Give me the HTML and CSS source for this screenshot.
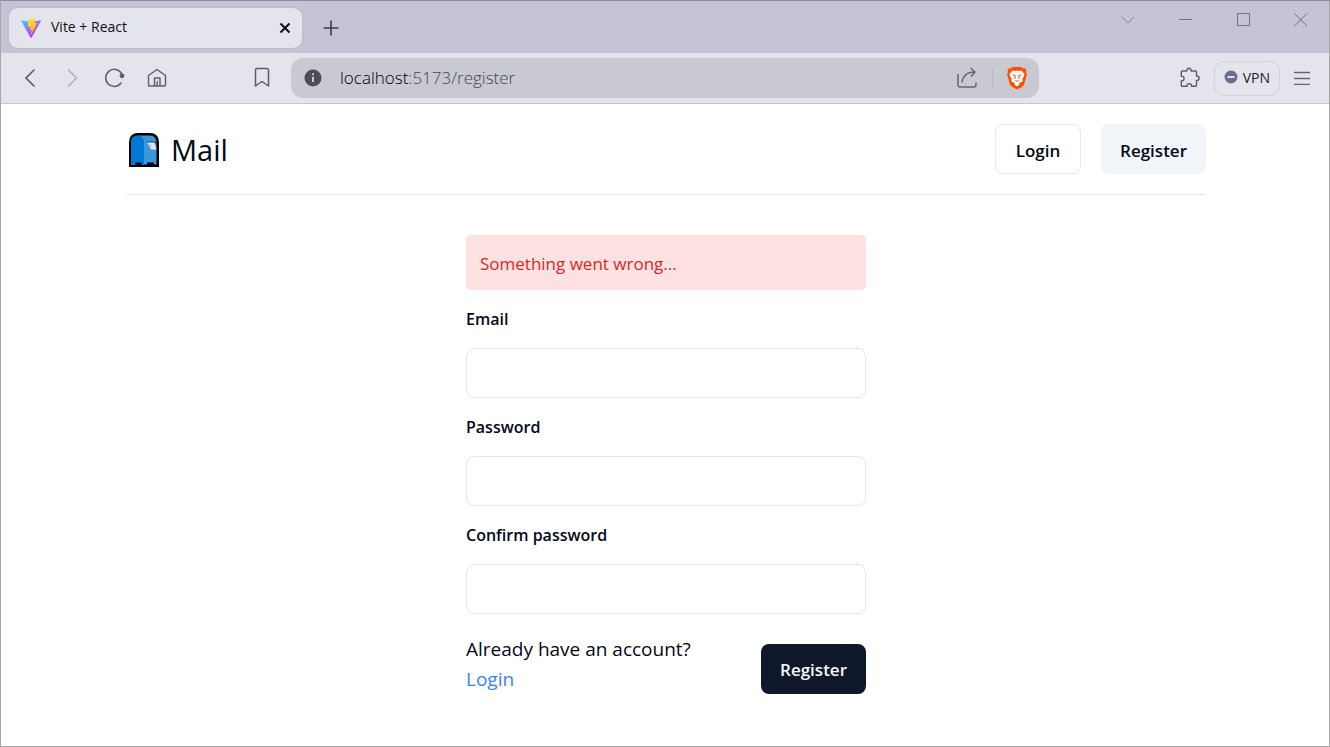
FILE: index.html
```html
<!DOCTYPE html>
<html lang="en">
<head>
<meta charset="utf-8">
<meta name="viewport" content="width=device-width, initial-scale=1">
<title>Vite + React</title>
<link rel="stylesheet" href="styles.css">
</head>
<body>
<div class="window">
  <div class="tabstrip">
    <div class="tab">
      <svg class="tab-icon" width="20" height="20" viewBox="0 0 256 257" aria-hidden="true">
        <defs>
          <linearGradient id="v1" x1="0" y1="0" x2="0.6" y2="0.85"><stop offset="0" stop-color="#41d1ff"/><stop offset="1" stop-color="#bd34fe"/></linearGradient>
          <linearGradient id="v2" x1="0.4" y1="0" x2="0.5" y2="1"><stop offset="0" stop-color="#ffea83"/><stop offset="0.1" stop-color="#ffdd35"/><stop offset="1" stop-color="#ffa800"/></linearGradient>
        </defs>
        <path fill="url(#v1)" d="M255.153 37.938 134.897 252.976c-2.483 4.44-8.862 4.466-11.382.048L.875 37.958c-2.746-4.814 1.371-10.646 6.827-9.67l120.385 21.517a6.537 6.537 0 0 0 2.322-.004l117.867-21.483c5.438-.991 9.574 4.796 6.877 9.62Z"/>
        <path fill="url(#v2)" d="M185.432.063 96.44 17.501a3.268 3.268 0 0 0-2.634 3.014l-5.474 92.456a3.268 3.268 0 0 0 3.997 3.378l24.777-5.718c2.318-.535 4.413 1.507 3.936 3.838l-7.361 36.047c-.495 2.426 1.782 4.5 4.151 3.78l15.304-4.649c2.372-.72 4.652 1.36 4.15 3.788l-11.698 56.621c-.732 3.542 3.979 5.473 5.943 2.437l1.313-2.028 72.516-144.72c1.215-2.423-.88-5.186-3.54-4.672l-25.505 4.922c-2.396.462-4.435-1.77-3.759-4.114l16.646-57.705c.677-2.35-1.37-4.583-3.769-4.113Z"/>
      </svg>
      <span class="tab-title">Vite + React</span>
      <button class="icon-btn tab-close" type="button" aria-label="Close tab">
        <svg width="12" height="12" viewBox="0 0 12 12" stroke="#111" stroke-width="2"><path d="M1.5 1.5l9 9M10.5 1.5l-9 9"/></svg>
      </button>
    </div>
    <button class="icon-btn new-tab" type="button" aria-label="New tab">
      <svg width="16" height="16" viewBox="0 0 16 16" stroke="#3c3c46" stroke-width="1.6"><path d="M8 .5v15M.5 8h15"/></svg>
    </button>
    <div class="window-controls">
      <button class="icon-btn" type="button" aria-label="Search tabs"><svg width="14" height="14" viewBox="0 0 14 14" fill="none" stroke="#858590"><path d="M1.500 3.500L8 10l6-6"/></svg></button>
      <button class="icon-btn" type="button" aria-label="Minimize"><svg width="14" height="14" viewBox="0 0 14 14" fill="none" stroke="#73737f"><path d="M1 6.500h13"/></svg></button>
      <button class="icon-btn" type="button" aria-label="Maximize"><svg width="14" height="14" viewBox="0 0 14 14" fill="none" stroke="#73737f"><path d="M1.500 .5h12v12h-12z"/></svg></button>
      <button class="icon-btn" type="button" aria-label="Close window"><svg width="14" height="14" viewBox="0 0 14 14" fill="none" stroke="#73737f"><path d="M.5 .5l12.500 12.500M13 .5L.5 13"/></svg></button>
    </div>
  </div>

  <div class="toolbar">
    <div class="nav">
      <div class="nav-group">
        <button class="icon-btn" type="button" aria-label="Back"><svg width="22" height="22" viewBox="0 0 22 22" fill="none" stroke="#56565e" stroke-width="1.6" stroke-linecap="round"><path d="M15 3L7 11l8 8"/></svg></button>
        <button class="icon-btn" type="button" aria-label="Forward"><svg width="22" height="22" viewBox="0 0 22 22" fill="none" stroke="#b0b0b8" stroke-width="1.6" stroke-linecap="round"><path d="M7.500 3l8 8-8 8"/></svg></button>
        <button class="icon-btn" type="button" aria-label="Reload"><svg width="22" height="22" viewBox="0 0 22 22" fill="none" stroke="#5d5d65" stroke-width="1.5" stroke-linecap="round"><path d="M19 7.500A8.500 8.500 0 1 0 18 16"/><circle cx="19" cy="8.800" r="2.400" fill="#5d5d65" stroke="none"/></svg></button>
        <button class="icon-btn" type="button" aria-label="Home"><svg width="22" height="22" viewBox="0 0 22 22" fill="none" stroke="#5d5d65" stroke-width="1.4" stroke-linejoin="round"><path d="M3.500 8.500L12 2.500l8.500 6v9.500a1 1 0 0 1-1 1h-15a1 1 0 0 1-1-1z"/><path d="M9.500 19v-8H15v8M12.200 19v-5"/></svg></button>
      </div>
      <button class="icon-btn" type="button" aria-label="Bookmark"><svg width="22" height="22" viewBox="0 0 22 22" fill="none" stroke="#5d5d65" stroke-width="1.5" stroke-linejoin="round"><path d="M4.500 3a1.500 1.500 0 0 1 1.500-1.500h10a1.500 1.500 0 0 1 1.500 1.500V19L11 14.500 4.500 19z"/></svg></button>
    </div>
    <div class="address">
      <svg width="18" height="18" viewBox="0 0 18 18" aria-hidden="true"><circle cx="9" cy="9" r="8.500" fill="#4d4e54"/><path d="M9 7.800v5.200" stroke="#c9c9d1" stroke-width="2"/><circle cx="9" cy="5.200" r="1.100" fill="#c9c9d1"/></svg>
      <span class="url"><span class="host">localhost</span>:5173/register</span>
      <button class="icon-btn" type="button" aria-label="Share"><svg width="22" height="22" viewBox="0 0 22 22" fill="none" stroke="#66666d" stroke-width="1.500" stroke-linejoin="round"><path d="M3 7v11a2 2 0 0 0 2 2h14a2 2 0 0 0 2-2v-2.500"/><path d="M7 15.500C7.500 9.500 12 5 19.500 5M15.500 1L20 5l-4 4.500"/></svg></button>
      <span class="separator"></span>
      <button class="icon-btn" type="button" aria-label="Brave Shields">
        <svg width="22" height="24" viewBox="0 0 22 24"><path fill="#ff5000" d="M6.500 1h9l1.500 1.500 2-.3L20.500 4.500l-.5 1.500.9 2.500-3 10.500-2 2L11 23.500 6.100 21l-2-2-3-10.500L2 6l-.5-1.500L3 2.200l2 .3z"/><path fill="#fff" d="M6.500 4.500L9 5l2-.6 2 .6 2.500-.5 3 3.500-.5 2-1.700 3.200.5 2-2.800 1.500-1 .8.700 1-2.700 2-2.700-2 .7-1-1-.8-2.800-1.500.5-2L4 10l-.5-2z"/><path d="M6.500 8.700l3 1M15.500 8.700l-3 1M9.300 10l-.6 3M12.700 10l.6 3M9.300 14.500l1.700.9 1.700-.9" fill="none" stroke="#ff5000" stroke-width="1"/></svg>
      </button>
    </div>
    <div class="extras">
      <button class="icon-btn" type="button" aria-label="Extensions"><svg width="22" height="22" viewBox="0 0 22 22" fill="none" stroke="#5d5d65" stroke-width="1.400" stroke-linejoin="round"><path d="M3.300 4h4.600c-.1-1.700.8-2.700 2.100-2.700S12.200 2.300 12.100 4h4.400a1 1 0 0 1 1 1v4c1.600 0 2.700.8 2.700 2.200s-1.100 2.300-2.700 2.200v4.800a1 1 0 0 1-1 1h-3.900c0-1.700-.9-2.600-2.300-2.600S8 17.500 8 19.200H3.300a1 1 0 0 1-1-1V14c1.700.1 2.800-.9 2.800-2.400S4 9 2.300 9.100V5a1 1 0 0 1 1-1z"/></svg></button>
      <button class="vpn" type="button"><svg width="14" height="14" viewBox="0 0 14 14" aria-hidden="true"><circle cx="7" cy="7" r="6.500" fill="#6b6f8f"/><path d="M3.500 7h7" stroke="#fff" stroke-width="1.600"/></svg>VPN</button>
      <button class="icon-btn" type="button" aria-label="Menu"><svg width="18" height="14" viewBox="0 0 18 14" stroke="#66666d" stroke-width="1.300"><path d="M1 1.500h16M1 7.500h16M1 13.400h16"/></svg></button>
    </div>
  </div>

  <div class="page">
    <header class="site-header">
      <div class="brand">
        <svg width="32" height="36" viewBox="0 0 32 36" aria-hidden="true">
          <path d="M1 36V11.500Q1 2 10 2h12q9 0 9 9.500V36z" fill="#000"/>
          <path d="M9 4.500h13q6.500 0 6.500 8v21H26v-2h-7v2h-4v-21z" fill="#3a96dd"/>
          <path d="M3 34V10.500q0-6 6.500-6t6.500 6V34h-2.500v-2.500H7.500V34z" fill="#0078d7"/>
          <path d="M18 10.500h10v2H20z" fill="#004e8c"/>
          <path d="M19 11.500h7.500l2 7h-5.500z" fill="#e3e3e3"/><path d="M19 11.500l4 2.500v4.500z" fill="#bcbcbc"/>
        </svg>
        <span>Mail</span>
      </div>
      <nav class="actions">
        <a class="btn outline" href="#login">Login</a>
        <a class="btn secondary" href="#register">Register</a>
      </nav>
    </header>
    <form class="form">
      <div class="alert" role="alert">Something went wrong...</div>
      <label for="email">Email</label>
      <input id="email" type="email">
      <label for="password">Password</label>
      <input id="password" type="password">
      <label for="confirm">Confirm password</label>
      <input id="confirm" type="password">
      <div class="form-footer">
        <p>Already have an account?<br><a href="#login">Login</a></p>
        <button class="btn primary" type="submit">Register</button>
      </div>
    </form>
  </div>
</div>
</body>
</html>
```
FILE: styles.css
```css
* { box-sizing: border-box; }

body {
  margin: 0;
  font-family: "Open Sans", "Noto Sans", sans-serif;
  color: #020817;
}

button, input { font: inherit; }

svg { display: block; flex: none; }

.window {
  display: flex;
  flex-direction: column;
  min-height: 100vh;
  border: 1px solid #a6a6a6;
  border-top-color: #8b8b97;
  background: #fff;
}

.icon-btn {
  display: flex;
  align-items: center;
  justify-content: center;
  padding: 0;
  border: 0;
  background: none;
}

.tabstrip {
  display: flex;
  align-items: flex-start;
  padding: 7px 21px 5px 8px;
  background: #c4c4d6;
}

.tab {
  display: flex;
  align-items: center;
  gap: 10px;
  width: 293px;
  height: 40px;
  padding: 0 11px 0 12px;
  border-radius: 9px;
  background: #e4e4ec;
  box-shadow: 0 0 3px #b4b4c8;
  color: #111;
  font-size: 14px;
  line-height: 20px;
}

.tab-title { flex: 1; padding-bottom: 2px; }

.new-tab { height: 40px; margin-left: 21px; }

.window-controls {
  display: flex;
  gap: 44px;
  margin-left: auto;
  padding-top: 5px;
}

.toolbar {
  display: grid;
  grid-template-columns: 290px 1fr 290px;
  align-items: center;
  padding: 5px 0;
  border-bottom: 1px solid #c6c6ce;
  background: #e4e4ec;
}

.nav {
  display: flex;
  justify-content: space-between;
  padding: 0 18px;
}

.nav-group { display: flex; gap: 20px; }

.address {
  display: flex;
  align-items: center;
  height: 40px;
  padding: 0 11px 0 13px;
  border-radius: 12px;
  background: #c9c9d1;
}

.url {
  flex: 1;
  padding-left: 18px;
  color: #45474d;
  font-size: 17px;
  font-weight: 300;
  line-height: 22px;
}

.host { color: #000; }

.separator {
  width: 1px;
  height: 20px;
  margin: 0 13px 0 15px;
  background: #b8b8c0;
}

.extras {
  display: flex;
  align-items: center;
  justify-content: flex-end;
  gap: 13px;
  padding-right: 18px;
}

.vpn {
  display: flex;
  align-items: center;
  gap: 5px;
  height: 35px;
  padding: 0 9px 2px;
  border: 1px solid #d2d2dc;
  border-radius: 10px;
  background: none;
  color: #222;
  font-size: 14px;
}

.page { padding: 0 20px 40px 22px; }

.site-header {
  display: flex;
  align-items: center;
  justify-content: space-between;
  max-width: 1080px;
  margin: 0 auto;
  padding: 20px 0;
  border-bottom: 1px solid #e2e8f0;
}

.brand {
  display: flex;
  align-items: center;
  gap: 11px;
  padding-left: 2px;
  font-size: 29px;
}

.actions { display: flex; gap: 20px; }

.btn {
  display: flex;
  align-items: center;
  justify-content: center;
  min-width: 86px;
  height: 50px;
  padding: 2px 18px 0;
  border: 1px solid transparent;
  border-radius: 8px;
  color: #020817;
  font-size: 17px;
  font-weight: 600;
  text-decoration: none;
}

.outline { border-color: #e2e8f0; }
.secondary { background: #f1f5f9; }
.primary { padding-top: 0; background: #0f172a; color: #f8fafc; }

.form {
  display: flex;
  flex-direction: column;
  gap: 20px;
  max-width: 400px;
  margin: 40px auto 0;
}

.alert {
  padding: 16px 14px 14px;
  border-radius: 5px;
  background: #fee2e2;
  color: #dc2626;
  font-size: 17px;
  line-height: 25px;
}

label {
  font-size: 16px;
  font-weight: 600;
  line-height: 18px;
}

input {
  width: 100%;
  height: 50px;
  padding: 0 14px;
  border: 1px solid #e2e8f0;
  border-radius: 8px;
  background: #fff;
}

.form-footer {
  display: flex;
  align-items: flex-end;
  justify-content: space-between;
}

.form-footer p {
  margin: 0;
  font-size: 19px;
  line-height: 30px;
}

.form-footer a:not(.btn) { color: #3b82f6; text-decoration: none; }
```
